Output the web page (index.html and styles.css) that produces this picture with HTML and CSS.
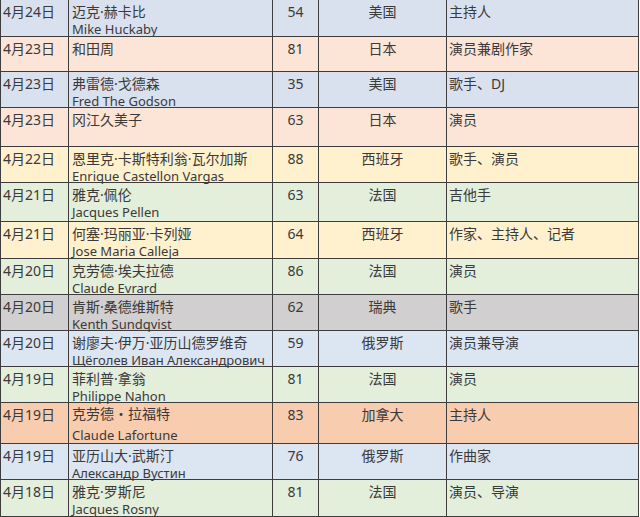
FILE: index.html
```html
<!DOCTYPE html>
<html lang="zh-CN">
<head>
<meta charset="utf-8">
<title>逝世名人</title>
<link rel="stylesheet" href="styles.css">
</head>
<body>
<table class="sheet">
  <colgroup>
    <col class="c-date"><col class="c-name"><col class="c-age"><col class="c-country"><col class="c-job">
  </colgroup>
  <tbody>
    <tr class="blue h37"><td class="date">4月24日</td><td class="name">迈克·赫卡比<span class="en">Mike Huckaby</span></td><td class="age">54</td><td class="country">美国</td><td class="job">主持人</td></tr>
    <tr class="peach h35"><td class="date">4月23日</td><td class="name">和田周</td><td class="age">81</td><td class="country">日本</td><td class="job">演员兼剧作家</td></tr>
    <tr class="blue h36"><td class="date">4月23日</td><td class="name">弗雷德·戈德森<span class="en">Fred The Godson</span></td><td class="age">35</td><td class="country">美国</td><td class="job">歌手、DJ</td></tr>
    <tr class="peach h39"><td class="date">4月23日</td><td class="name">冈江久美子</td><td class="age">63</td><td class="country">日本</td><td class="job">演员</td></tr>
    <tr class="yellow h36"><td class="date">4月22日</td><td class="name">恩里克·卡斯特利翁·瓦尔加斯<span class="en">Enrique Castellon Vargas</span></td><td class="age">88</td><td class="country">西班牙</td><td class="job">歌手、演员</td></tr>
    <tr class="green h39"><td class="date">4月21日</td><td class="name">雅克·佩伦<span class="en">Jacques Pellen</span></td><td class="age">63</td><td class="country">法国</td><td class="job">吉他手</td></tr>
    <tr class="yellow h37"><td class="date">4月21日</td><td class="name">何塞·玛丽亚·卡列娅<span class="en">Jose Maria Calleja</span></td><td class="age">64</td><td class="country">西班牙</td><td class="job">作家、主持人、记者</td></tr>
    <tr class="green h36"><td class="date">4月20日</td><td class="name">克劳德·埃夫拉德<span class="en">Claude Evrard</span></td><td class="age">86</td><td class="country">法国</td><td class="job">演员</td></tr>
    <tr class="grey h36"><td class="date">4月20日</td><td class="name">肯斯·桑德维斯特<span class="en">Kenth Sundqvist</span></td><td class="age">62</td><td class="country">瑞典</td><td class="job">歌手</td></tr>
    <tr class="sky h36"><td class="date">4月20日</td><td class="name">谢廖夫·伊万·亚历山德罗维奇<span class="en">Щёголев Иван Александрович</span></td><td class="age">59</td><td class="country">俄罗斯</td><td class="job">演员兼导演</td></tr>
    <tr class="green h36"><td class="date">4月19日</td><td class="name">菲利普·拿翁<span class="en">Philippe Nahon</span></td><td class="age">81</td><td class="country">法国</td><td class="job">演员</td></tr>
    <tr class="orange h40"><td class="date">4月19日</td><td class="name tall">克劳德・拉福特<span class="en">Claude Lafortune</span></td><td class="age">83</td><td class="country">加拿大</td><td class="job">主持人</td></tr>
    <tr class="sky h36"><td class="date">4月19日</td><td class="name">亚历山大·武斯汀<span class="en">Александр Вустин</span></td><td class="age">76</td><td class="country">俄罗斯</td><td class="job">作曲家</td></tr>
    <tr class="green h37"><td class="date">4月18日</td><td class="name">雅克·罗斯尼<span class="en">Jacques Rosny</span></td><td class="age">81</td><td class="country">法国</td><td class="job">演员、导演</td></tr>
  </tbody>
</table>
</body>
</html>
```
FILE: styles.css
```css
html, body {
  margin: 0;
  padding: 0;
  background: #ffffff;
}

.sheet {
  border-collapse: collapse;
  table-layout: fixed;
  width: 639px;
  margin-top: -1px;
  font-family: "Noto Sans", "Noto Sans CJK SC", sans-serif;
  font-size: 14px;
  line-height: 17.5px;
  color: #3a3a3a;
}

.c-date { width: 68px; }
.c-name { width: 204px; }
.c-age { width: 46px; }
.c-country { width: 128px; }
.c-job { width: 192px; }

.sheet td {
  border: 1px solid #3d3d3d;
  padding: 3px 3px 0;
  vertical-align: top;
  white-space: nowrap;
}

.sheet td.date { padding-left: 2px; }
.sheet td.age,
.sheet td.country { text-align: center; padding-left: 0; padding-right: 0; }
.sheet td.job { padding-left: 2px; }

.en {
  display: block;
  font-size: 13px;
  line-height: 16px;
  margin-bottom: -4px;
}

.sheet td.tall { line-height: 22px; padding-top: 0; }
.sheet td.tall .en { line-height: 20px; margin-bottom: -2px; }

.h35 { height: 35px; }
.h36 { height: 36px; }
.h37 { height: 37px; }
.h39 { height: 39px; }
.h40 { height: 40px; }

.blue { background: #dae1ee; }
.sky { background: #dce5f2; }
.peach { background: #fce4d7; }
.yellow { background: #fff1cd; }
.green { background: #e3eedb; }
.grey { background: #d1cfcf; }
.orange { background: #f8ccae; }
```
